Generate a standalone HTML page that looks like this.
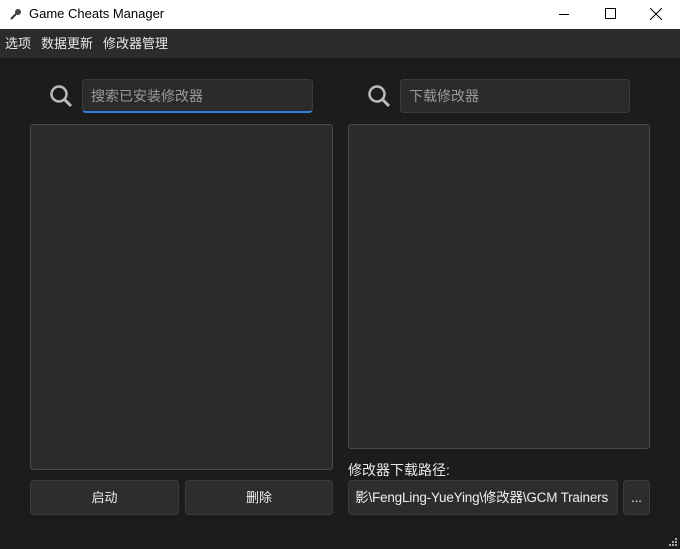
<!DOCTYPE html>
<html><head><meta charset="utf-8"><style>
*{margin:0;padding:0;box-sizing:border-box}
body{width:680px;height:549px;background:#1c1c1c;font-family:"Liberation Sans","Noto Sans CJK SC",sans-serif;position:relative;overflow:hidden;color:#e8e8e8}
.title{position:absolute;left:0;top:0;width:680px;height:29px;background:#fff;color:#000;font-size:13px}
.menu{position:absolute;left:0;top:29px;width:680px;height:29px;background:#2b2b2b;font-size:13px;line-height:29px}
.a{position:absolute}
.box{position:absolute;background:#2b2b2b;border:1px solid #4a4a4a;border-radius:3px}
.inp{position:absolute;background:#2b2b2b;border:1px solid #3c3c3c;border-radius:4px;font-size:14px;color:#9a9a9a;line-height:32px;padding-left:8px}
.btn{position:absolute;background:#2d2d2d;border:1px solid #3c3c3c;border-radius:4px;font-size:13px;text-align:center;line-height:33px;color:#eee}
</style></head><body>
<div class="title">
<svg class="a" style="left:9px;top:7px" width="14" height="14" viewBox="0 0 14 14"><path d="M2 12 L7 7" stroke="#333" stroke-width="2"/><circle cx="9" cy="5" r="3" fill="#444"/></svg>
<span class="a" style="left:29px;top:6px">Game Cheats Manager</span>
<span class="a" style="left:559px;top:14px;width:10px;height:1px;background:#000"></span>
<span class="a" style="left:605px;top:8px;width:11px;height:11px;border:1px solid #000"></span>
<svg class="a" style="left:650px;top:8px" width="12" height="12"><path d="M0 0L12 12M12 0L0 12" stroke="#000"/></svg>
</div>
<div class="menu"><span class="a" style="left:5px">选项</span><span class="a" style="left:41px">数据更新</span><span class="a" style="left:103px">修改器管理</span></div>
<svg class="a" style="left:49px;top:84px" width="25" height="25"><circle cx="10" cy="10" r="7.5" stroke="#bbb" stroke-width="2.5" fill="none"/><path d="M15.5 15.5L22 22" stroke="#bbb" stroke-width="3"/></svg>
<div class="inp" style="left:82px;top:79px;width:231px;height:34px;border-bottom:2px solid #2f7fd8">搜索已安装修改器</div>
<svg class="a" style="left:367px;top:84px" width="25" height="25"><circle cx="10" cy="10" r="7.5" stroke="#bbb" stroke-width="2.5" fill="none"/><path d="M15.5 15.5L22 22" stroke="#bbb" stroke-width="3"/></svg>
<div class="inp" style="left:400px;top:79px;width:230px;height:34px">下载修改器</div>
<div class="box" style="left:30px;top:124px;width:303px;height:346px"></div>
<div class="box" style="left:348px;top:124px;width:302px;height:325px"></div>
<div class="a" style="left:348px;top:460px;font-size:14px">修改器下载路径:</div>
<div class="btn" style="left:30px;top:480px;width:149px;height:35px">启动</div>
<div class="btn" style="left:185px;top:480px;width:148px;height:35px">删除</div>
<div class="btn" style="left:348px;top:480px;width:270px;height:35px;text-align:right;padding-right:9px;white-space:nowrap;overflow:hidden;font-size:13.5px;letter-spacing:-0.2px">影\FengLing-YueYing\修改器\GCM Trainers</div>
<div class="btn" style="left:623px;top:480px;width:27px;height:35px">...</div>
<svg class="a" style="left:668px;top:537px" width="10" height="10" fill="#aaa"><rect x="7" y="1" width="2" height="2"/><rect x="4" y="4" width="2" height="2"/><rect x="7" y="4" width="2" height="2"/><rect x="1" y="7" width="2" height="2"/><rect x="4" y="7" width="2" height="2"/><rect x="7" y="7" width="2" height="2"/></svg>
</body></html>
